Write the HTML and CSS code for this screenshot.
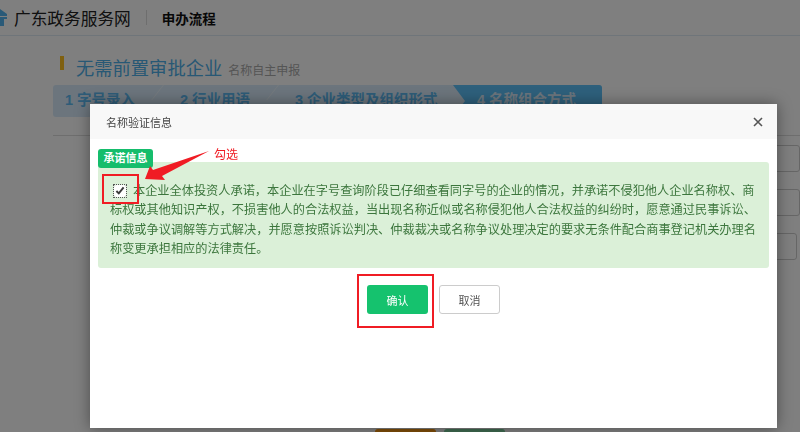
FILE: index.html
```html
<!DOCTYPE html>
<html lang="zh-CN">
<head>
    <meta charset="UTF-8">
    <title>申办流程</title>
    <link rel="stylesheet" href="styles.css">
</head>
<body>
    <div class="page">
        <div class="topbar">
            <svg class="logo" width="7" height="17" viewBox="0 0 7 17">
                <path d="M0 0 L7 5 V7 H0 Z M0 8 H7 V10 H4 V17 H0 Z" fill="#55b5f0"/>
            </svg>
            <span class="site-name">广东政务服务网</span>
            <span class="topbar-sep"></span>
            <span class="page-name">申办流程</span>
        </div>

        <div class="content">
            <div class="title-row">
                <span class="title-mark"></span>
                <h1>无需前置审批企业</h1>
                <span class="title-sub">名称自主申报</span>
            </div>
            <div class="steps">
                <div class="step">1 字号录入</div>
                <div class="step">2 行业用语</div>
                <div class="step step-wide">3 企业类型及组织形式</div>
                <div class="step step-active">4 名称组合方式</div>
            </div>
            <div class="divider"></div>
            <div class="fields">
                <div class="field"></div>
                <div class="field"></div>
                <div class="field field-short"></div>
            </div>
            <div class="actions">
                <span class="action action-orange"></span>
                <span class="action action-green"></span>
            </div>
        </div>
    </div>

    <div class="backdrop"></div>

    <div class="modal">
        <div class="modal-header">
            <span>名称验证信息</span>
            <svg class="modal-close" width="10" height="10" viewBox="0 0 10 10">
                <path d="M1 1 L9 9 M9 1 L1 9" stroke="#555" stroke-width="1.600" fill="none"/>
            </svg>
        </div>
        <div class="modal-body">
            <span class="tag">承诺信息</span>
            <div class="notice">
                <input class="agree" type="checkbox" checked>本企业全体投资人承诺，本企业在字号查询阶段已仔细查看同字号的企业的情况，并承诺不侵犯他人企业名称权、商标权或其他知识产权，不损害他人的合法权益，当出现名称近似或名称侵犯他人合法权益的纠纷时，愿意通过民事诉讼、仲裁或争议调解等方式解决，并愿意按照诉讼判决、仲裁裁决或名称争议处理决定的要求无条件配合商事登记机关办理名称变更承担相应的法律责任。
            </div>
            <div class="modal-buttons">
                <button class="btn btn-ok">确认</button>
                <button class="btn btn-cancel">取消</button>
            </div>
        </div>
    </div>

    <!-- red marks drawn over the screenshot -->
    <div class="mark mark-check"></div>
    <div class="mark mark-ok"></div>
    <svg class="mark-arrow" width="70" height="34" viewBox="0 0 70 34">
        <path d="M0 29 L5 16 L8 20 L64 1 L17 26 L20 30 Z" fill="#f01c24"/>
    </svg>
    <span class="mark-text">勾选</span>
</body>
</html>
```

FILE: styles.css
```css
html, body {
    margin: 0;
    padding: 0;
    height: 432px;
    overflow: hidden;
    font-family: "Liberation Sans", "Noto Sans CJK SC", sans-serif;
}
.page {
    height: 432px;
    overflow: hidden;
    background-color: #fff;
}
.topbar {
    height: 35px;
    display: flex;
    align-items: center;
    border-bottom: 1px solid #dfeaf5;
}
.logo {
    margin-right: 7px;
}
.site-name {
    font-size: 16.7px;
    color: #222;
}
.topbar-sep {
    width: 1px;
    height: 15px;
    margin: 0 15px;
    background-color: #ddd;
}
.page-name {
    font-size: 13.500px;
    font-weight: bold;
    color: #111;
}
.content {
    padding-left: 53px;
}
.title-row {
    display: flex;
    align-items: baseline;
    height: 49px;
    padding: 18px 0 0 7px;
    box-sizing: border-box;
}
.title-mark {
    width: 4px;
    height: 14px;
    margin: 2px 12px 0 0;
    align-self: flex-start;
    background-color: #ffc020;
}
.title-row h1 {
    margin: 0;
    font-size: 18.300px;
    font-weight: normal;
    color: #4fb0ea;
}
.title-sub {
    margin-left: 6px;
    font-size: 12px;
    color: #aaa;
}
.steps {
    width: 549px;
    height: 32px;
    display: flex;
    border-radius: 3px;
    background: linear-gradient(90deg, #d8ebfa 0%, #d8ebfa 70%, #e8e8e8 100%);
}
.step {
    position: relative;
    width: 115px;
    padding-left: 12px;
    box-sizing: border-box;
    line-height: 31px;
    font-size: 14.500px;
    font-weight: bold;
    white-space: nowrap;
    color: #5cb8f0;
}
.step::after {
    content: "";
    position: absolute;
    top: 0;
    right: 4px;
    height: 15px;
    border-right: 1px solid rgba(255, 255, 255, 0.5);
    transform: skewX(-38deg);
    transform-origin: top;
}
.step-wide {
    width: 170px;
}
.step-wide::after,
.step-active::after {
    display: none;
}
.step-active {
    flex: 1;
    padding-left: 24px;
    color: #d8ebfa;
    background-color: #5cc0f8;
    border-radius: 0 3px 3px 0;
    clip-path: polygon(0 0, 100% 0, 100% 100%, 0 100%, 12px 50%);
}
.divider {
    height: 1px;
    margin-top: 18px;
    background-color: #ddd;
}
.fields {
    display: flex;
    flex-direction: column;
    align-items: flex-end;
    gap: 17px;
    margin-top: 9px;
}
.field {
    width: 60px;
    height: 27px;
    border: 1px solid #ccc;
    border-radius: 3px;
    box-sizing: border-box;
}
.field-short {
    margin-right: 3px;
}
.actions {
    display: flex;
    gap: 8px;
    margin: 169px 0 0 322px;
}
.action {
    width: 61px;
    height: 30px;
    border-radius: 3px;
}
.action-orange {
    background-color: #ff9a10;
}
.action-green {
    background-color: #7cd4a0;
}
.backdrop {
    position: fixed;
    top: 0;
    left: 0;
    right: 0;
    bottom: 0;
    background-color: rgba(0, 0, 0, 0.5);
}
.modal {
    position: absolute;
    top: 104px;
    left: 90px;
    width: 687px;
    height: 324px;
    background-color: #fff;
    box-shadow: 0 0 14px rgba(0, 0, 0, 0.4);
}
.modal-header {
    height: 35px;
    padding: 0 14px 0 16px;
    display: flex;
    justify-content: space-between;
    align-items: center;
    font-size: 11px;
    color: #444;
    background-color: #f8f8f8;
}
.modal-body {
    padding: 10px 8px 0;
}
.tag {
    display: block;
    width: 55px;
    height: 19px;
    line-height: 19px;
    text-align: center;
    font-size: 11px;
    font-weight: bold;
    color: #fff;
    border-radius: 3px;
    background-color: #15bd6c;
    position: relative;
}
.notice {
    height: 106px;
    margin-top: -6px;
    padding: 20px 12px 0;
    box-sizing: border-box;
    font-size: 12.200px;
    line-height: 19.300px;
    color: #3c763d;
    border-radius: 3px;
    background-color: #dbf0d8;
}
.agree {
    width: 12px;
    height: 12px;
    margin: 0 7px 0 4px;
    vertical-align: -2px;
    accent-color: #fff;
    outline: 1px dotted #555;
    outline-offset: 0;
}
.modal-buttons {
    display: flex;
    justify-content: center;
    gap: 11px;
    margin-top: 17px;
}
.btn {
    width: 61px;
    height: 29px;
    padding: 0;
    font-family: inherit;
    font-size: 11px;
    border-radius: 3px;
}
.btn-ok {
    color: #fff;
    border: none;
    background-color: #15c26e;
}
.btn-cancel {
    color: #555;
    border: 1px solid #ccc;
    background-color: #fff;
}
.mark {
    position: absolute;
    border: 2px solid #f01c24;
    box-sizing: border-box;
}
.mark-check {
    top: 174px;
    left: 102px;
    width: 37px;
    height: 30px;
}
.mark-ok {
    top: 274px;
    left: 357px;
    width: 77px;
    height: 54px;
}
.mark-arrow {
    position: absolute;
    top: 150px;
    left: 145px;
}
.mark-text {
    position: absolute;
    top: 145px;
    left: 214px;
    font-size: 12px;
    color: #f01c24;
}
```
